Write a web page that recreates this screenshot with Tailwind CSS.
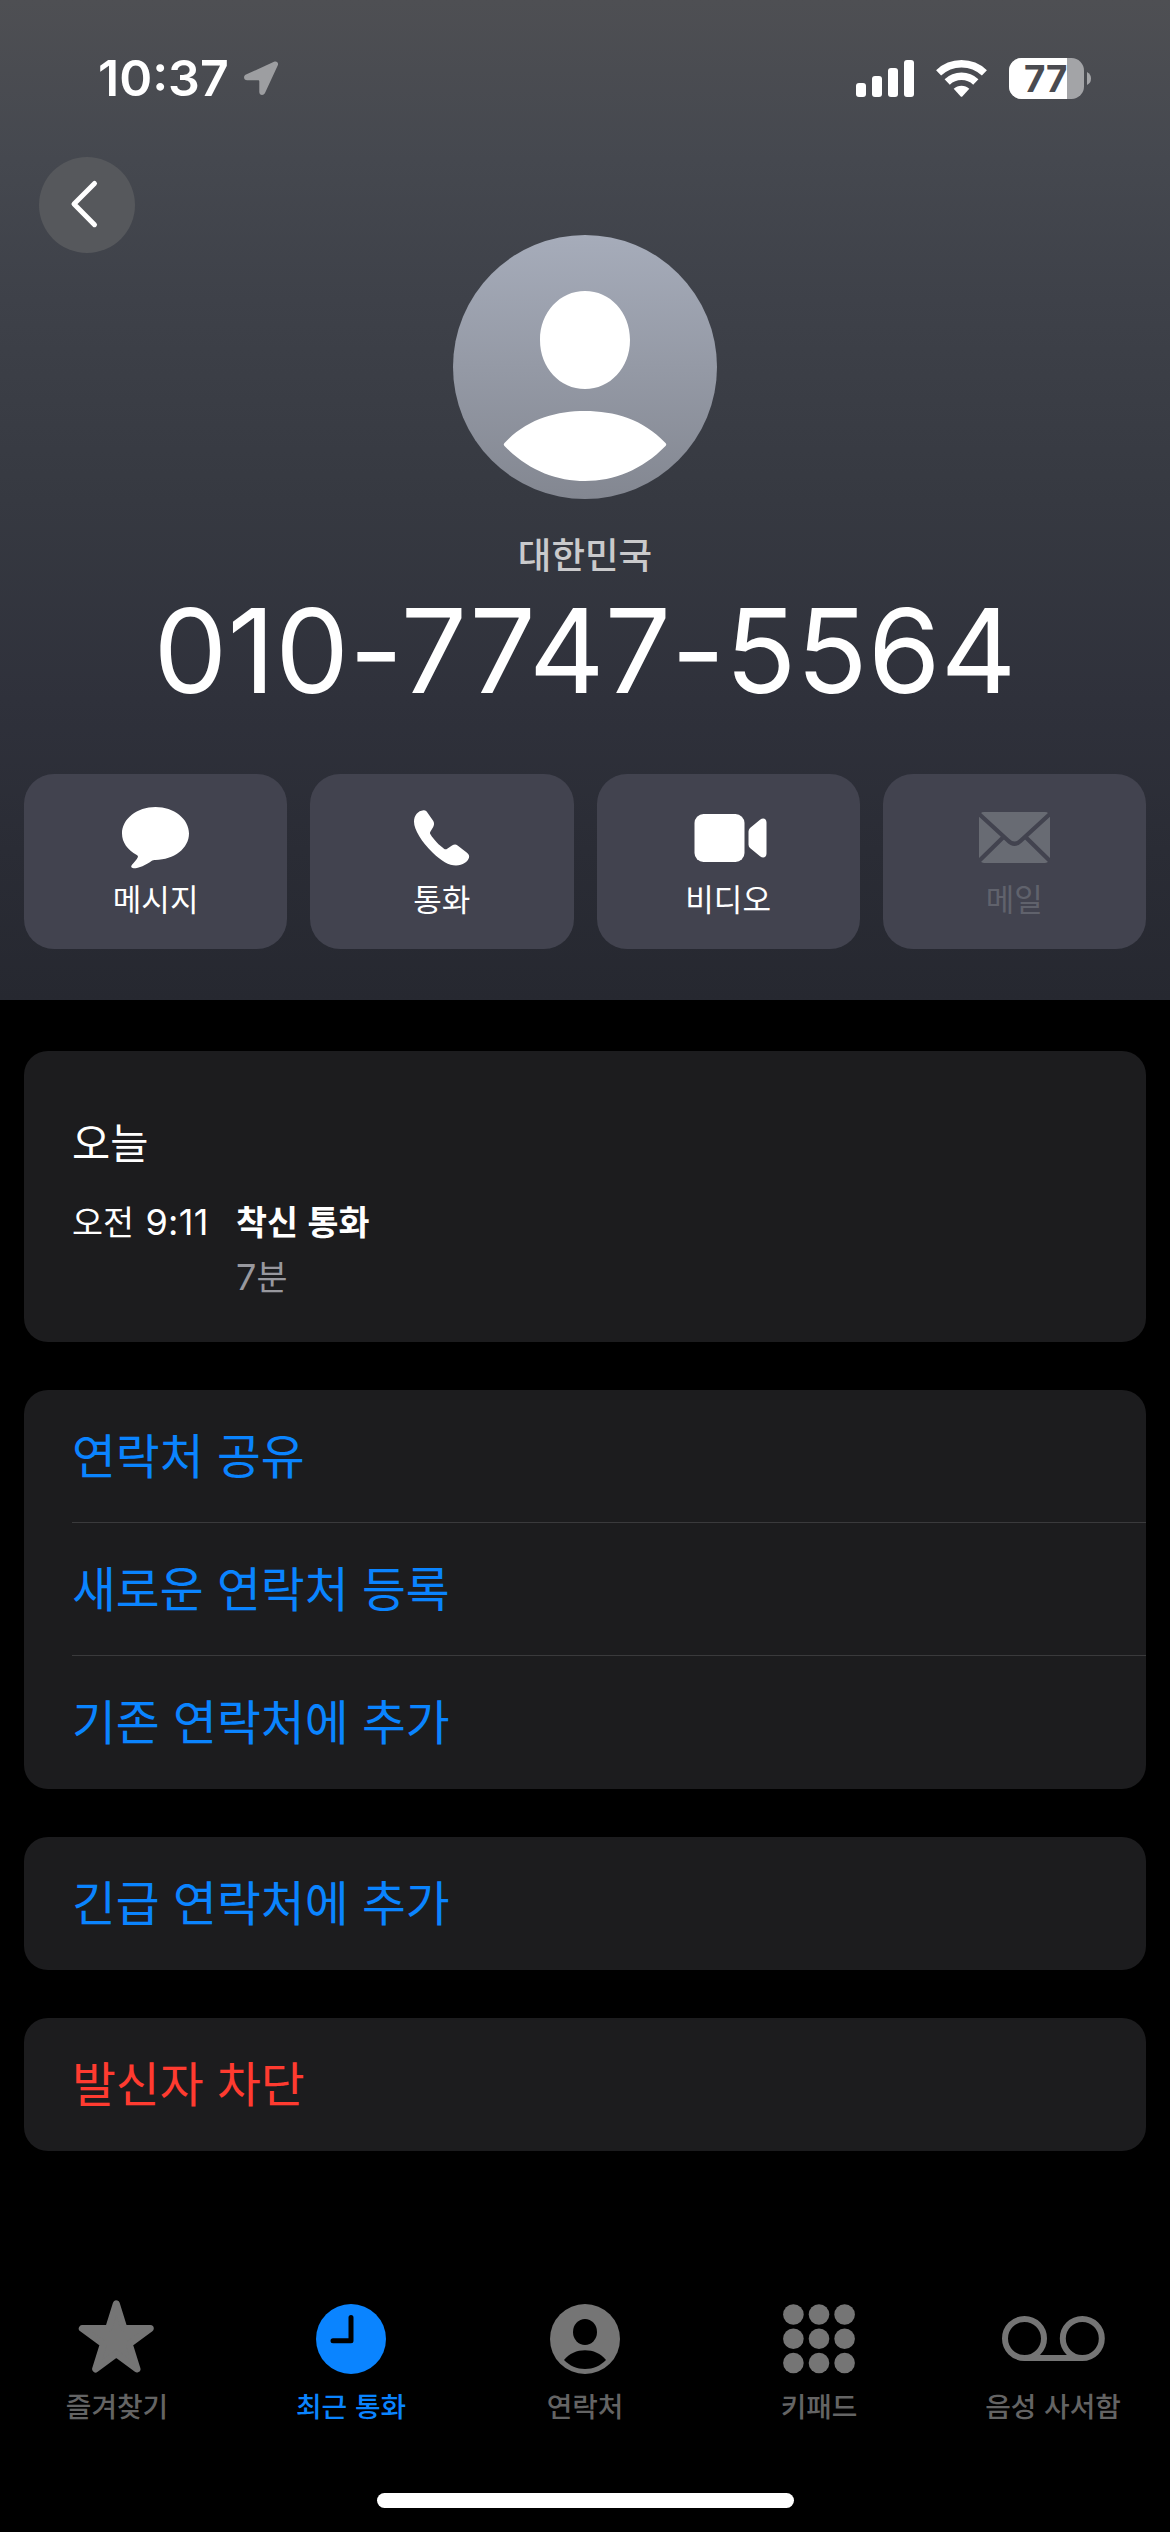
<!DOCTYPE html>
<html lang="ko">
<head>
<meta charset="utf-8">
<title>최근 통화</title>
<script src="https://cdn.jsdelivr.net/npm/@tailwindcss/browser@4"></script>
</head>
<body class="w-[1170px] h-[2532px] bg-black text-white overflow-hidden flex flex-col font-['Noto_Sans_CJK_KR',sans-serif]">

<header class="h-[1000px] flex flex-col bg-[linear-gradient(180deg,#4e4f53_0px,#45484f_160px,#3e4149_300px,#363941_500px,#2f313b_700px,#2a2c35_850px,#262830_1000px)]">
  <!-- Status bar -->
  <div class="h-[156px] pl-[98px] pr-[79px] flex items-center justify-between font-[Inter,sans-serif]">
    <div class="flex items-center">
      <span class="w-[146px] text-[50px] leading-[60px] font-semibold whitespace-nowrap">10:37</span>
      <svg width="35" height="35" viewBox="0 0 35 35" class="fill-[#9d9ea1]"><path d="M30 .8C32.800-.3 34.900 1.800 33.700 4.600L21 32C19.600 35 15.300 34.500 15.300 31V20.500C15.300 19.600 14.900 19.200 14 19.200H3.200C-.5 19.200-1 15 2 13.600Z"/></svg>
    </div>
    <div class="flex items-center gap-[22px]">
      <svg width="58" height="37" viewBox="0 0 58 37" class="fill-white"><rect y="23" width="10" height="14" rx="3"/><rect x="16" y="16" width="10" height="21" rx="3"/><rect x="32" y="8" width="10" height="29" rx="3"/><rect x="48" width="10" height="37" rx="3"/></svg>
      <svg width="51" height="37" viewBox="0 0 51 37" fill="none" stroke="#fff"><path stroke-width="7.300" d="M2.600 12.850A33.300 33.300 0 0 1 48.400 12.850"/><path stroke-width="7.600" d="M11.200 21.900A20.800 20.800 0 0 1 39.800 21.900"/><path fill="#fff" stroke="none" d="M17.700 28.800A11.300 11.300 0 0 1 33.300 28.800L26.500 36.200Q25.500 37.200 24.500 36.200Z"/></svg>
      <svg width="82" height="41" viewBox="0 0 82 41"><defs><clipPath id="cell"><rect width="75" height="41" rx="12.500"/></clipPath></defs><g clip-path="url(#cell)"><rect width="75" height="41" fill="#a3a4a7"/><rect width="58" height="41" fill="#fff"/></g><path d="M78 14Q82 16 82 20.500T78 27Z" fill="#a3a4a7"/><text x="15" y="34" textLength="43.500" lengthAdjust="spacingAndGlyphs" font-family="Inter" font-weight="700" font-size="37" fill="#4a4b50">77</text></svg>
    </div>
  </div>

  <button class="mt-px ml-[39px] size-24 shrink-0 rounded-full bg-[#56585c] flex items-center justify-center">
    <svg width="96" height="96" viewBox="0 0 96 96" fill="none" stroke="#fff" stroke-width="5" stroke-linecap="round" stroke-linejoin="round"><path d="M55.500 26.500L35 47L55.500 67.700"/></svg>
  </button>

  <svg class="-mt-[18px] mx-auto shrink-0" width="264" height="264" viewBox="0 0 264 264"><defs><linearGradient id="av" x2="0" y2="1"><stop stop-color="#a6acba"/><stop offset="1" stop-color="#838791"/></linearGradient></defs><circle cx="132" cy="132" r="132" fill="url(#av)"/><path fill="#fff" d="M132 56C157 56 177 77 177 105S157 154 132 154S87 133 87 105S107 56 132 56ZM51.500 211Q50 209.500 51.500 208C74 184 103 176 132 176S190 184 212.500 208Q214 209.500 212.500 211C189 235 161 246 132 246S75 235 51.500 211Z"/></svg>

  <p class="mt-[35px] h-10 text-center text-[36.500px] leading-10 font-medium text-[#cacacc]">대한민국</p>
  <h1 class="mt-[17px] h-[120px] text-center text-[117px] leading-[120px] tracking-[0.2px] font-[Inter,sans-serif] whitespace-nowrap">010-7747-5564</h1>

  <div class="mt-[63px] px-6 grid grid-cols-4 gap-[23px] text-[31px] leading-10">
    <button class="h-[175px] rounded-[30px] bg-[#42434f] flex flex-col items-center pt-[31px]">
      <svg width="67" height="67" viewBox="0 0 67 67" class="fill-white"><path d="M33.500 2C52 2 67 13.800 67 28.600S52 55 33.500 55C32 55 30.600 55.100 29.500 55.900C24 60 16.500 63.300 11.500 63.200C9 63.100 8.500 61.500 10 59.800C12.500 57 14.800 54.500 15.800 52.300C16.200 51.200 15.800 50.800 14.800 50.100C5.500 45 0 37.500 0 28.600C0 13.800 15 2 33.500 2Z"/></svg>
      <span class="mt-[6px]">메시지</span>
    </button>
    <button class="h-[175px] rounded-[30px] bg-[#42434f] flex flex-col items-center pt-[31px]">
      <svg width="57" height="67" viewBox="0 -4 57 67" class="fill-white"><path d="M10.500 1.300C12 1 13.200 1.800 14 3L20.300 12C21.400 14 21.200 16 20.200 18L17.200 23C16.800 24 17 24.700 17.600 25.600C20.500 30.500 26.500 36.800 31 39.700C32 40.400 33 40.500 34.200 39.700L39 36.600C41 35.300 43 35.300 44.600 36.500L54 43.800C55.800 45.300 56.500 46.800 56 48.800C54.500 52.800 50 56.500 43 56.500C36 56.500 28 52 19.500 43.500C9 33 1 21 1 12.700C1 6.500 5 1.800 10.500 1.300Z"/></svg>
      <span class="mt-[6px]">통화</span>
    </button>
    <button class="h-[175px] rounded-[30px] bg-[#42434f] flex flex-col items-center pt-[31px]">
      <svg width="72" height="67" viewBox="-2.500 -9 72 67" class="fill-white overflow-visible"><rect width="50" height="48" rx="9"/><path d="M54 17.500Q54 15.500 55.500 14L65.500 5.800C68.500 3.300 72 4.500 72 8.500V39.500C72 43.500 68.500 44.700 65.500 42.200L55.500 34Q54 32.500 54 30.500Z"/></svg>
      <span class="mt-[6px]">비디오</span>
    </button>
    <button class="h-[175px] rounded-[30px] bg-[#42434f] flex flex-col items-center pt-[31px] text-[#60626c]">
      <svg width="71" height="67" viewBox="0 -7 71 67"><rect width="71" height="51" rx="5" fill="#686b73"/><path fill="none" stroke="#42434f" stroke-width="4.200" d="M-1 1L29 28.500Q35.500 35 42 28.500L72 1M-1 50L25 24.500M72 50L46 24.500"/></svg>
      <span class="mt-[6px]">메일</span>
    </button>
  </div>
</header>

<main class="px-6 pt-[51px] flex flex-col gap-12 text-[47.700px]">
  <section class="h-[291px] rounded-3xl bg-[#1c1c1e] px-12 pt-[62px]">
    <h2 class="text-[41.500px] leading-[56px]">오늘</h2>
    <div class="mt-8 flex text-[33.700px] leading-10">
      <div class="w-[164px] whitespace-nowrap">오전 <span class="ml-[2px] font-[Inter,sans-serif] text-[36px] tracking-[0.3px]">9:11</span></div>
      <div>
        <p class="font-bold">착신 통화</p>
        <p class="mt-[15px] text-[#98989e]"><span class="font-[Inter,sans-serif] text-[36px]">7</span>분</p>
      </div>
    </div>
  </section>

  <section class="rounded-3xl bg-[#1c1c1e] pl-12 text-[#0a84ff]">
    <div class="h-[133px] pb-[5px] flex items-center border-b border-[#3a3a3c]">연락처 공유</div>
    <div class="h-[133px] pb-[5px] flex items-center border-b border-[#3a3a3c]">새로운 연락처 등록</div>
    <div class="h-[133px] pb-[6px] flex items-center">기존 연락처에 추가</div>
  </section>

  <section class="h-[133px] pb-[6px] rounded-3xl bg-[#1c1c1e] pl-12 flex items-center text-[#0a84ff]">긴급 연락처에 추가</section>
  <section class="h-[133px] pb-[6px] rounded-3xl bg-[#1c1c1e] pl-12 flex items-center text-[#ff3b30]">발신자 차단</section>
</main>

<nav class="mt-[145px] grid grid-cols-5 text-[27.800px] leading-10 font-medium text-[#646464]">
  <a class="flex flex-col items-center gap-[5px]">
    <svg width="78" height="84" viewBox="0 -3 78 84" class="fill-[#757575] stroke-[#757575]" stroke-width="7" stroke-linejoin="round"><path d="M38.300 4.800L46 29.500H72.300L51.200 45L59 70L38.300 54.600L17.600 70L25.400 45L4.300 29.500H30.600Z"/></svg>
    <span>즐겨찾기</span>
  </a>
  <a class="flex flex-col items-center gap-[5px] text-[#0a84ff]">
    <svg width="70" height="84" viewBox="0 -8 70 84"><circle cx="35" cy="35" r="35" fill="#0a84ff"/><path fill="none" stroke="#000" stroke-width="5" stroke-linecap="round" stroke-linejoin="round" d="M35 13.500V36.800H17"/></svg>
    <span>최근 통화</span>
  </a>
  <a class="flex flex-col items-center gap-[5px]">
    <svg width="70" height="84" viewBox="0 -8 70 84"><circle cx="35" cy="35" r="35" fill="#757575"/><ellipse cx="35" cy="28" rx="12" ry="13"/><path d="M14 56C19 49.500 27 46.300 35 46.300S51 49.500 56 56C50.500 61.800 43 65 35 65S19.500 61.800 14 56Z"/></svg>
    <span>연락처</span>
  </a>
  <a class="flex flex-col items-center gap-[5px]">
    <svg width="72" height="84" viewBox="0 -8 72 84" class="fill-[#757575]"><circle cx="10.400" cy="10.500" r="10.300"/><circle cx="36" cy="10.500" r="10.300"/><circle cx="61.600" cy="10.500" r="10.300"/><circle cx="10.400" cy="34.700" r="10.300"/><circle cx="36" cy="34.700" r="10.300"/><circle cx="61.600" cy="34.700" r="10.300"/><circle cx="10.400" cy="59" r="10.300"/><circle cx="36" cy="59" r="10.300"/><circle cx="61.600" cy="59" r="10.300"/></svg>
    <span>키패드</span>
  </a>
  <a class="flex flex-col items-center gap-[5px]">
    <svg width="103" height="84" viewBox="0 -20 103 84" fill="none" class="stroke-[#757575]" stroke-width="6"><circle cx="22.500" cy="22.500" r="19.500"/><circle cx="80.300" cy="22.500" r="19.500"/><path d="M22.500 42H80.300"/></svg>
    <span>음성 사서함</span>
  </a>
</nav>

<div class="mt-[68px] mx-auto w-[417px] h-[15px] shrink-0 rounded-full bg-white"></div>
</body>
</html>
